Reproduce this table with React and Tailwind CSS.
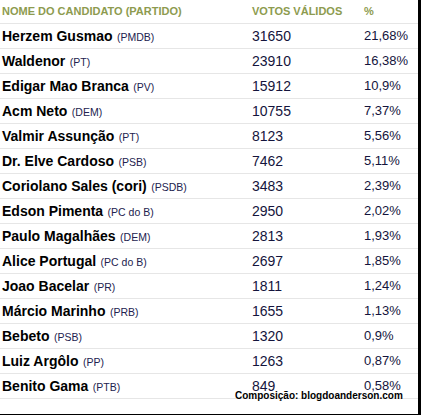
import React from 'react';

const rows = [
  ['Herzem Gusmao', 'PMDB', '31650', '21,68%'],
  ['Waldenor', 'PT', '23910', '16,38%'],
  ['Edigar Mao Branca', 'PV', '15912', '10,9%'],
  ['Acm Neto', 'DEM', '10755', '7,37%'],
  ['Valmir Assunção', 'PT', '8123', '5,56%'],
  ['Dr. Elve Cardoso', 'PSB', '7462', '5,11%'],
  ['Coriolano Sales (cori)', 'PSDB', '3483', '2,39%'],
  ['Edson Pimenta', 'PC do B', '2950', '2,02%'],
  ['Paulo Magalhães', 'DEM', '2813', '1,93%'],
  ['Alice Portugal', 'PC do B', '2697', '1,85%'],
  ['Joao Bacelar', 'PR', '1811', '1,24%'],
  ['Márcio Marinho', 'PRB', '1655', '1,13%'],
  ['Bebeto', 'PSB', '1320', '0,9%'],
  ['Luiz Argôlo', 'PP', '1263', '0,87%'],
  ['Benito Gama', 'PTB', '849', '0,58%'],
];

const App = () => {
  return (
    <div className="relative w-[421px] h-[417px] bg-white font-['Liberation_Sans',Arial,sans-serif]">
      <div className="h-[415px] border-r-[3px] border-b border-black">
        <div className="grid grid-cols-[250px_114px_1fr] h-[24px] items-center border-b border-[#e6e6e6] text-[11px] font-bold uppercase text-[#8d9b4f]">
          <div className="pl-[2px]">Nome do candidato (partido)</div>
          <div className="pl-[2px]">Votos válidos</div>
          <div>%</div>
        </div>
        {rows.map(([nome, partido, votos, pct]) => (
          <div key={nome} className="grid grid-cols-[250px_114px_1fr] h-[25px] items-center border-b border-[#e6e6e6]">
            <div className="pl-[2px] whitespace-nowrap">
              <span className="text-[14px] font-bold text-black">{nome}</span>{' '}
              <span className="text-[10.5px] text-[#22224f]">({partido})</span>
            </div>
            <div className="pl-[2px] text-[14px] text-[#14143c]">{votos}</div>
            <div className="text-[13px] text-[#14143c]">{pct}</div>
          </div>
        ))}
      </div>
      <div className="absolute left-[235px] top-[391px] text-[10px] font-bold text-black leading-none">
        Composição: blogdoanderson.com
      </div>
    </div>
  );
};

export default App;
